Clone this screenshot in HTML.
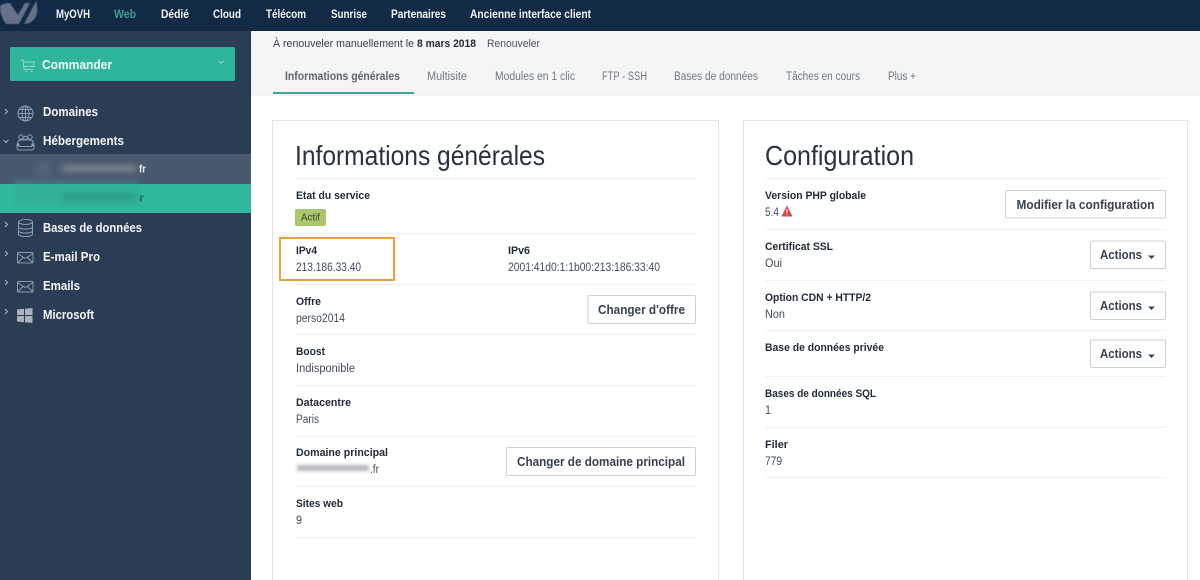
<!DOCTYPE html>
<html lang="fr"><head><meta charset="utf-8"><title>OVH</title>
<style>
html,body{margin:0;padding:0;width:1200px;height:580px;overflow:hidden;background:#fff}
svg{display:block;filter:blur(.3px)}
text{font-family:"Liberation Sans",sans-serif;font-size:11px;fill:#2d3540}
.n{font-size:11.500px;font-weight:700;fill:#f2f4f6}
.s{font-size:13px;font-weight:700;fill:#f4f6f8}
.t{font-size:11.500px;fill:#6f7882}
.h{font-size:27.500px;fill:#2a323c}
.l{font-size:11px;font-weight:700;fill:#222c38}
.v{font-size:11.500px;fill:#434c56}
.b{font-size:13px;font-weight:700;fill:#38424e}
.ic{fill:none;stroke:#8f9cac;stroke-width:1}
.ln{stroke:#efefef;stroke-width:1}
.btn{fill:#fff;stroke:#cfd2d5;stroke-width:1}
</style></head><body>
<svg width="1200" height="580" viewBox="0 0 1200 580" xmlns="http://www.w3.org/2000/svg">
<defs>
<filter id="bl" x="-20%" y="-100%" width="140%" height="300%"><feGaussianBlur stdDeviation="2.800"/></filter>
<filter id="bs" x="-20%" y="-100%" width="140%" height="300%"><feGaussianBlur stdDeviation="1.800"/></filter>
<filter id="lg" x="-10%" y="-10%" width="120%" height="120%"><feGaussianBlur stdDeviation=".6"/></filter>
</defs>
<rect width="1200" height="580" fill="#fff"/>
<!-- header band -->
<rect x="251" y="31" width="949" height="64" fill="#f5f5f5"/>
<line x1="251" y1="95" x2="1200" y2="95" stroke="#e9e9e9"/>
<!-- top nav -->
<rect width="1200" height="31" fill="#122a45"/>
<g filter="url(#lg)" fill="#66718a">
<path d="M0 6 Q3 3 10 3 L18 15 L25 3 L30 3 L19 24 L6 24 Q0 16 0 6Z"/>
<path d="M24 24 L36 1 Q39 12 35 18 Q31 24 24 24Z"/>
</g>
<text class="n" x="56" y="18" textLength="34" lengthAdjust="spacingAndGlyphs">MyOVH</text>
<text class="n" x="114" y="18" textLength="22" lengthAdjust="spacingAndGlyphs" style="fill:#3f9f90">Web</text>
<text class="n" x="161" y="18" textLength="28" lengthAdjust="spacingAndGlyphs">Dédié</text>
<text class="n" x="213" y="18" textLength="28" lengthAdjust="spacingAndGlyphs">Cloud</text>
<text class="n" x="266" y="18" textLength="40" lengthAdjust="spacingAndGlyphs">Télécom</text>
<text class="n" x="331" y="18" textLength="36" lengthAdjust="spacingAndGlyphs">Sunrise</text>
<text class="n" x="391" y="18" textLength="55" lengthAdjust="spacingAndGlyphs">Partenaires</text>
<text class="n" x="470" y="18" textLength="121" lengthAdjust="spacingAndGlyphs">Ancienne interface client</text>
<!-- sidebar -->
<rect x="0" y="31" width="251" height="549" fill="#2a3d55"/>
<rect x="10" y="47" width="225" height="34" rx="1.500" fill="#2fb59b"/>
<path d="M20.500 60h2.500l1 9.500h9M23.300 62h10.700v4.500h-10.200M25 71.500h1.500M31 71.500h1.500" fill="none" stroke="#8fdccb" stroke-width="1"/>
<text x="42" y="69" textLength="70" lengthAdjust="spacingAndGlyphs" style="font-size:13px;font-weight:700;fill:#f1faf8">Commander</text>
<path d="M218.500 61l2.500 2 2.500-2" fill="none" stroke="#8fdccb"/>
<rect x="0" y="154" width="251" height="30" fill="#4a5a6e"/>
<rect x="0" y="184" width="251" height="29" fill="#2fb89c"/>
<rect x="14" y="180" width="124" height="26" fill="#35a793" opacity=".35" filter="url(#bs)"/>
<rect x="62" y="165" width="74" height="7" fill="#75818f" filter="url(#bl)"/>
<rect x="36" y="163" width="14" height="12" fill="#53637a" filter="url(#bl)"/>
<rect x="62" y="194" width="74" height="7" fill="#259d87" filter="url(#bl)"/>
<text x="139" y="172.500" textLength="7" lengthAdjust="spacingAndGlyphs" style="font-size:11px;font-weight:700;fill:#e8ebee">fr</text>
<text x="139" y="201.500" textLength="5" lengthAdjust="spacingAndGlyphs" style="font-size:11px;font-weight:700;fill:#1f6f60">r</text>
<g fill="none" stroke="#aab4c0"><path d="M5 109l2.500 2.500-2.500 2.500M5 222l2.500 2.500-2.500 2.500M5 251l2.500 2.500-2.500 2.500M5 280l2.500 2.500-2.500 2.500M5 309l2.500 2.500-2.500 2.500M3.500 140l2.500 2.500 2.500-2.500"/></g>
<!-- globe -->
<g class="ic"><circle cx="25.500" cy="113.500" r="7.500"/><ellipse cx="25.500" cy="113.500" rx="3.500" ry="7.500"/><path d="M18 113.500h15M19 109.500h13M19 117.500h13M25.500 106v15"/></g>
<!-- people -->
<g class="ic"><circle cx="21" cy="137" r="2.200"/><circle cx="30" cy="137" r="2.200"/><circle cx="25.500" cy="138" r="1.800"/><path d="M18 146v-4q0-2 3-2h9q3 0 3 2v4M17 144h2v2.500h13V144h2v3.500q0 2.500-3 2.500H20q-3 0-3-2.500z"/></g>
<!-- db -->
<g class="ic"><ellipse cx="25.500" cy="222" rx="7" ry="2.500"/><path d="M18.500 222v12q0 2.500 7 2.500t7-2.500v-12M18.500 226.500q0 2.500 7 2.500t7-2.500M18.500 230.500q0 2.500 7 2.500t7-2.500"/></g>
<!-- mail -->
<g class="ic"><rect x="17.500" y="252.500" width="15.500" height="10.500" rx="1"/><path d="M17.500 253.500l7.700 5 7.800-5M18 262.500l5-5M32.500 262.500l-5-5"/><rect x="17.500" y="281.500" width="15.500" height="10.500" rx="1"/><path d="M17.500 282.500l7.700 5 7.800-5M18 291.500l5-5M32.500 291.500l-5-5"/></g>
<!-- windows -->
<path d="M17 309.500l7-.7v6.200h-7zM25 308.700l7.500-.7v7h-7.500zM17 316h7v6.200l-7-.7zM25 316h7.500v7l-7.500-.7z" fill="#a8b2bf"/>
<text class="s" x="43" y="116" textLength="55" lengthAdjust="spacingAndGlyphs">Domaines</text>
<text class="s" x="43" y="145" textLength="81" lengthAdjust="spacingAndGlyphs">Hébergements</text>
<text class="s" x="43" y="232" textLength="99" lengthAdjust="spacingAndGlyphs">Bases de données</text>
<text class="s" x="43" y="261" textLength="57" lengthAdjust="spacingAndGlyphs">E-mail Pro</text>
<text class="s" x="43" y="290" textLength="37" lengthAdjust="spacingAndGlyphs">Emails</text>
<text class="s" x="43" y="319" textLength="51" lengthAdjust="spacingAndGlyphs">Microsoft</text>
<!-- renew line -->
<text x="273" y="47" textLength="141" lengthAdjust="spacingAndGlyphs" style="font-size:11px;fill:#3a424c">À renouveler manuellement le</text>
<text x="417" y="47" textLength="59" lengthAdjust="spacingAndGlyphs" style="font-size:11px;font-weight:700;fill:#222c38">8 mars 2018</text>
<text x="487" y="47" textLength="53" lengthAdjust="spacingAndGlyphs" style="font-size:11px;fill:#4a525c">Renouveler</text>
<!-- tabs -->
<text class="t" x="285" y="80" textLength="115" lengthAdjust="spacingAndGlyphs" style="font-weight:700;fill:#5c6670">Informations générales</text>
<text class="t" x="427" y="80" textLength="40" lengthAdjust="spacingAndGlyphs">Multisite</text>
<text class="t" x="495" y="80" textLength="80" lengthAdjust="spacingAndGlyphs">Modules en 1 clic</text>
<text class="t" x="602" y="80" textLength="45" lengthAdjust="spacingAndGlyphs">FTP - SSH</text>
<text class="t" x="674" y="80" textLength="84" lengthAdjust="spacingAndGlyphs">Bases de données</text>
<text class="t" x="786" y="80" textLength="74" lengthAdjust="spacingAndGlyphs">Tâches en cours</text>
<text class="t" x="888" y="80" textLength="28" lengthAdjust="spacingAndGlyphs">Plus +</text>
<rect x="273" y="92" width="141" height="2" fill="#3fa596"/>
<!-- card 1 -->
<path d="M272.500 581V120.500H718.500V581" fill="#fff" stroke="#e3e3e3"/>
<text class="h" x="295" y="165" textLength="250" lengthAdjust="spacingAndGlyphs">Informations générales</text>
<g class="ln"><path d="M295.500 178.500H696M295.500 233.500H696M295.500 284.500H696M295.500 334.500H696M295.500 385.500H696M295.500 436.500H696M295.500 486.500H696M295.500 537.500H696" fill="none"/></g>
<text class="l" x="296" y="199" textLength="74" lengthAdjust="spacingAndGlyphs">Etat du service</text>
<rect x="295" y="209" width="31" height="17" rx="2" fill="#a8c66c"/>
<text x="301" y="220.500" textLength="19" lengthAdjust="spacingAndGlyphs" style="font-size:10px;fill:#38482a">Actif</text>
<text class="l" x="296" y="254" textLength="21" lengthAdjust="spacingAndGlyphs">IPv4</text>
<text class="v" x="296" y="271" textLength="65" lengthAdjust="spacingAndGlyphs">213.186.33.40</text>
<text class="l" x="508" y="254" textLength="22" lengthAdjust="spacingAndGlyphs">IPv6</text>
<text class="v" x="508" y="271" textLength="152" lengthAdjust="spacingAndGlyphs">2001:41d0:1:1b00:213:186:33:40</text>
<rect x="280" y="238" width="114" height="42" fill="none" stroke="#e8a33d" stroke-width="2"/>
<text class="l" x="296" y="305" textLength="25" lengthAdjust="spacingAndGlyphs">Offre</text>
<text class="v" x="296" y="322" textLength="49" lengthAdjust="spacingAndGlyphs">perso2014</text>
<rect class="btn" x="588" y="295.500" width="107.500" height="28" rx="1.500"/>
<text class="b" x="598" y="314" textLength="87" lengthAdjust="spacingAndGlyphs">Changer d'offre</text>
<text class="l" x="296" y="355" textLength="29" lengthAdjust="spacingAndGlyphs">Boost</text>
<text class="v" x="296" y="372" textLength="59" lengthAdjust="spacingAndGlyphs">Indisponible</text>
<text class="l" x="296" y="406" textLength="55" lengthAdjust="spacingAndGlyphs">Datacentre</text>
<text class="v" x="296" y="423" textLength="23" lengthAdjust="spacingAndGlyphs">Paris</text>
<text class="l" x="296" y="456" textLength="92" lengthAdjust="spacingAndGlyphs">Domaine principal</text>
<rect x="297" y="465" width="72" height="6" fill="#b4b6ba" filter="url(#bs)"/>
<text class="v" x="370" y="473" textLength="9" lengthAdjust="spacingAndGlyphs">.fr</text>
<rect class="btn" x="506.500" y="447.500" width="189" height="28" rx="1.500"/>
<text class="b" x="517" y="466" textLength="168" lengthAdjust="spacingAndGlyphs">Changer de domaine principal</text>
<text class="l" x="296" y="507" textLength="47" lengthAdjust="spacingAndGlyphs">Sites web</text>
<text class="v" x="296" y="524" textLength="6" lengthAdjust="spacingAndGlyphs">9</text>
<!-- card 2 -->
<path d="M743.500 581V120.500H1187.500V581" fill="#fff" stroke="#e3e3e3"/>
<text class="h" x="765" y="165" textLength="149" lengthAdjust="spacingAndGlyphs">Configuration</text>
<g class="ln"><path d="M765.500 178.500H1166M765.500 229.500H1166M765.500 280.500H1166M765.500 330.500H1166M765.500 376.500H1166M765.500 427.500H1166M765.500 477.500H1166" fill="none"/></g>
<text class="l" x="765" y="199" textLength="101" lengthAdjust="spacingAndGlyphs">Version PHP globale</text>
<text class="v" x="765" y="216" textLength="14" lengthAdjust="spacingAndGlyphs">5.4</text>
<path d="M787 205.500l5.500 11h-11z" fill="#d64550"/><path d="M787 209v4M787 214.200v1" stroke="#fff" stroke-width="1"/>
<rect class="btn" x="1005.500" y="190.500" width="160" height="27.500" rx="1.500"/>
<text class="b" x="1016.500" y="209" textLength="138" lengthAdjust="spacingAndGlyphs">Modifier la configuration</text>
<text class="l" x="765" y="250" textLength="68" lengthAdjust="spacingAndGlyphs">Certificat SSL</text>
<text class="v" x="765" y="267" textLength="17" lengthAdjust="spacingAndGlyphs">Oui</text>
<rect class="btn" x="1090.500" y="241" width="75" height="27.500" rx="1.500"/>
<text class="b" x="1100" y="259" textLength="42" lengthAdjust="spacingAndGlyphs">Actions</text>
<path d="M1148 255.500h7l-3.500 3.500z" fill="#3a4450"/>
<text class="l" x="765" y="301" textLength="106" lengthAdjust="spacingAndGlyphs">Option CDN + HTTP/2</text>
<text class="v" x="765" y="318" textLength="20" lengthAdjust="spacingAndGlyphs">Non</text>
<rect class="btn" x="1090.500" y="292" width="75" height="27.500" rx="1.500"/>
<text class="b" x="1100" y="310" textLength="42" lengthAdjust="spacingAndGlyphs">Actions</text>
<path d="M1148 306.500h7l-3.500 3.500z" fill="#3a4450"/>
<text class="l" x="765" y="351" textLength="119" lengthAdjust="spacingAndGlyphs">Base de données privée</text>
<rect class="btn" x="1090.500" y="340" width="75" height="27.500" rx="1.500"/>
<text class="b" x="1100" y="358" textLength="42" lengthAdjust="spacingAndGlyphs">Actions</text>
<path d="M1148 354.500h7l-3.500 3.500z" fill="#3a4450"/>
<text class="l" x="765" y="397" textLength="111" lengthAdjust="spacingAndGlyphs">Bases de données SQL</text>
<text class="v" x="765" y="414" textLength="6" lengthAdjust="spacingAndGlyphs">1</text>
<text class="l" x="765" y="448" textLength="23" lengthAdjust="spacingAndGlyphs">Filer</text>
<text class="v" x="765" y="465" textLength="17" lengthAdjust="spacingAndGlyphs">779</text>
</svg>
</body></html>
